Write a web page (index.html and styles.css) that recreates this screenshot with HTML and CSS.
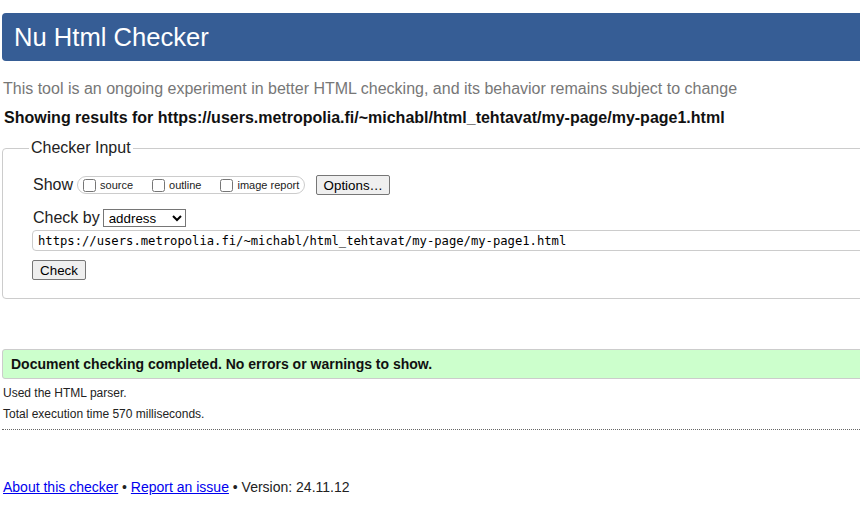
FILE: index.html
```html
<!DOCTYPE html>
<html lang="en">
<head>
<meta charset="utf-8">
<title>Showing results for https://users.metropolia.fi/~michabl/html_tehtavat/my-page/my-page1.html - Nu Html Checker</title>
<link rel="stylesheet" href="styles.css">
</head>
<body>
<div class="page">
  <h1 class="title">Nu Html Checker</h1>
  <p class="intro">This tool is an ongoing experiment in better HTML checking, and its behavior remains subject to change</p>
  <p class="showing">Showing results for https://users.metropolia.fi/~michabl/html_tehtavat/my-page/my-page1.html</p>

  <fieldset class="input-box">
    <legend class="legend">Checker Input</legend>
    <div class="row row-show">
      <span class="row-label">Show</span>
      <span class="pill">
        <label class="opt"><input type="checkbox" class="cb">source</label>
        <label class="opt"><input type="checkbox" class="cb">outline</label>
        <label class="opt"><input type="checkbox" class="cb">image report</label>
      </span>
      <button class="btn btn-options" type="button">Options…</button>
    </div>
    <div class="row row-by">
      <span class="row-label by-label">Check by</span>
      <select class="sel"><option>address</option></select>
    </div>
    <input class="url" type="text" value="https://users.metropolia.fi/~michabl/html_tehtavat/my-page/my-page1.html">
    <div class="row row-submit">
      <button class="btn btn-check" type="button">Check</button>
    </div>
  </fieldset>

  <p class="success">Document checking completed. No errors or warnings to show.</p>
  <p class="details">Used the HTML parser.</p>
  <p class="details details-second">Total execution time 570 milliseconds.</p>
  <hr class="dotted">

  <p class="footer"><a href="#" class="link">About this checker</a> • <a href="#" class="link">Report an issue</a> • Version: 24.11.12</p>
</div>
</body>
</html>
```

FILE: styles.css
```css
html {
  overflow: hidden;
}

body {
  margin: 0;
  background: #fff;
  color: #222;
  font-family: "Liberation Sans", Arial, sans-serif;
  font-size: 16px;
}

.page {
  width: 1000px;
  padding-left: 2px;
}

.title {
  margin: 13px 0 0 0;
  height: 48px;
  line-height: 48px;
  padding-left: 12px;
  background: #365d95;
  color: #fff;
  font-size: 25.6px;
  font-weight: normal;
  border-radius: 4px 0 0 4px;
}

.intro {
  margin: 19px 0 0 1px;
  line-height: 18px;
  color: #777;
}

.showing {
  margin: 11px 0 0 2px;
  line-height: 18px;
  font-weight: bold;
  color: #111;
}

.input-box {
  margin: 12px 0 0 0;
  padding: 0 0 18px 30px;
  border: 1px solid #ccc;
  border-radius: 4px;
}

.legend {
  margin-left: -4px;
  padding: 0 2px;
  line-height: 18px;
  color: #222;
}

.row {
  display: flex;
  align-items: center;
}

.row-show {
  height: 20px;
  margin-top: 18px;
}

.row-label {
  line-height: 18px;
  color: #222;
}

.row-show .row-label {
  margin-right: 4px;
}

.pill {
  display: flex;
  align-items: center;
  height: 16px;
  padding: 0 5px 0 5px;
  border: 1px solid #ccc;
  border-radius: 9px;
  gap: 19px;
}

.opt {
  display: flex;
  align-items: center;
  gap: 4px;
  font-size: 11px;
  color: #222;
}

.cb {
  margin: 0;
  width: 13px;
  height: 13px;
}

.btn {
  margin: 0;
  height: 20px;
  padding: 0 6px;
  font-family: "Liberation Sans", Arial, sans-serif;
  font-size: 13.33px;
  color: #000;
  background: #efefef;
  border: 1px solid #767676;
  border-radius: 2px;
}

.btn-options {
  margin-left: 11px;
  width: 74px;
}

.row-by {
  height: 18px;
  margin-top: 14px;
}

.by-label {
  margin-right: 3px;
}

.sel {
  margin: 0;
  width: 83px;
  height: 18px;
  padding: 0 0 0 1px;
  font-family: "Liberation Sans", Arial, sans-serif;
  font-size: 13.33px;
  color: #000;
  background: #fff;
  border: 1px solid #767676;
  border-radius: 0;
}

.url {
  display: block;
  box-sizing: border-box;
  margin: 3px 0 0 -1px;
  width: 900px;
  height: 21px;
  padding: 0 0 0 5px;
  font-family: "DejaVu Sans Mono", "Liberation Mono", monospace;
  font-size: 12.2px;
  color: #000;
  border: 1px solid #ccc;
  border-radius: 4px 0 0 4px;
  outline: none;
}

.row-submit {
  margin-top: 9px;
}

.btn-check {
  margin-left: -1px;
  width: 54px;
}

.success {
  margin: 50px 0 0 0;
  height: 28px;
  line-height: 28px;
  padding-left: 8px;
  background: #ccffcc;
  border: 1px solid #ccc;
  border-radius: 3px 0 0 3px;
  font-size: 14px;
  font-weight: bold;
  color: #111;
}

.details {
  margin: 7px 0 0 1px;
  line-height: 14px;
  font-size: 12px;
  color: #222;
}

.details-second {
  margin-top: 7px;
}

.dotted {
  margin: 8px 0 0 0;
  height: 0;
  border: 0;
  border-top: 1px dotted #666;
}

.footer {
  margin: 49px 0 0 1px;
  line-height: 16px;
  font-size: 14px;
  color: #222;
}

.link {
  color: #0000ee;
}
```
